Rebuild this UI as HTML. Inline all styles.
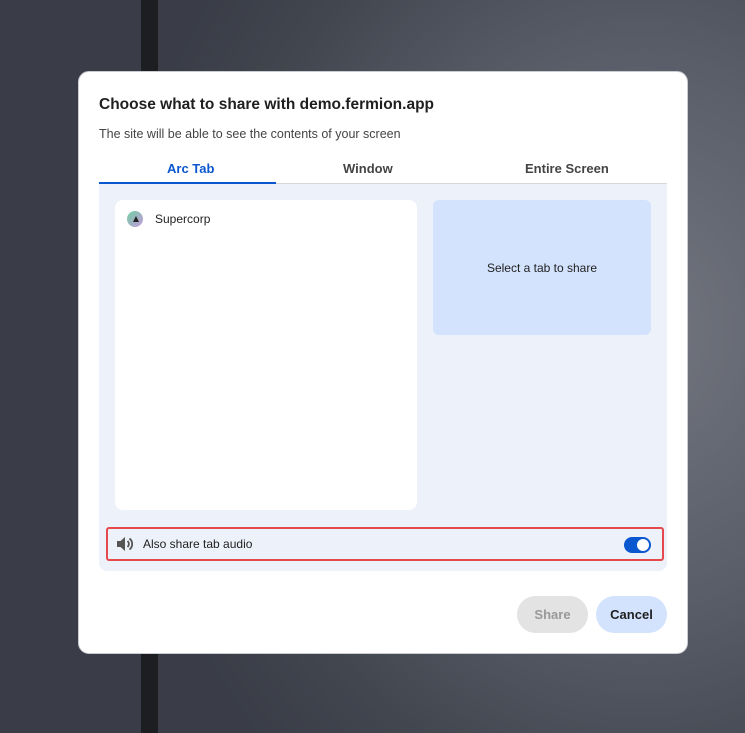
<!DOCTYPE html>
<html><head><style>
*{margin:0;padding:0;box-sizing:border-box}
body{width:745px;height:733px;overflow:hidden;position:relative;font-family:"Liberation Sans",sans-serif;
background:radial-gradient(ellipse 520px 600px at 640px 330px,#73767f 0%,#5a5e69 45%,#42464f 80%,#3a3d47 100%);}
.strip{position:absolute;left:141px;top:0;width:17px;height:733px;background:#1d1e21}
.dlg{position:absolute;left:78px;top:71px;width:610px;height:583px;background:#fff;border-radius:11px;border:1px solid #c9cbd0}
.t{position:absolute;font-size:15.5px;font-weight:bold;color:#1f1f1f;left:20px;top:24px}
.s{position:absolute;font-size:12.5px;color:#444;left:20px;top:55px}
.tab{position:absolute;top:89px;font-size:13px;font-weight:bold;color:#444}
.line{position:absolute;left:20px;top:111px;width:568px;height:1px;background:#d8d8d8}
.act{position:absolute;left:20px;top:110px;width:177px;height:2px;background:#0b57d0}
.area{position:absolute;left:20px;top:112px;width:568px;height:387px;background:#edf1f9;border-radius:0 0 8px 8px}
.list{position:absolute;left:16px;top:16px;width:302px;height:310px;background:#fff;border-radius:8px}
.prev{position:absolute;left:334px;top:16px;width:218px;height:135px;background:#d3e3fd;border-radius:6px;font-size:12px;color:#1f1f1f;display:flex;align-items:center;justify-content:center}
.audio{position:absolute;left:7px;top:343px;width:558px;height:34px;border:2px solid #e5484d;border-radius:3px}
.btn{position:absolute;top:524px;height:37px;border-radius:19px;font-size:13px;font-weight:bold;display:flex;align-items:center;justify-content:center}
</style></head><body>
<div class="strip"></div>
<div class="dlg">
<div class="t">Choose what to share with demo.fermion.app</div>
<div class="s">The site will be able to see the contents of your screen</div>
<div class="tab" style="left:88px;color:#0b57d0">Arc Tab</div>
<div class="tab" style="left:264px">Window</div>
<div class="tab" style="left:446px">Entire Screen</div>
<div class="line"></div><div class="act"></div>
<div class="area">
 <div class="list">
  <div style="position:absolute;left:12px;top:11px;width:16px;height:16px;border-radius:50%;background:linear-gradient(135deg,#6fd0a0,#c79ae0)"></div>
  <div style="position:absolute;left:18px;top:16px;width:0;height:0;border-left:3px solid transparent;border-right:3px solid transparent;border-bottom:6px solid #222"></div>
  <div style="position:absolute;left:40px;top:12px;font-size:12px;color:#1f1f1f">Supercorp</div>
 </div>
 <div class="prev">Select a tab to share</div>
 <div class="audio">
  <svg style="position:absolute;left:8px;top:7px" width="18" height="16" viewBox="0 0 18 16"><path d="M1 5h3.5l4.5-4v14l-4.5-4H1z" fill="#555"/><path d="M11.5 5a4 4 0 0 1 0 6M13.5 2.5a7 7 0 0 1 0 11" stroke="#555" stroke-width="1.8" fill="none"/></svg>
  <div style="position:absolute;left:35px;top:8px;font-size:12px;color:#1f1f1f">Also share tab audio</div>
  <div style="position:absolute;left:516px;top:8px;width:27px;height:16px;border-radius:8px;background:#0b57d0"><div style="position:absolute;right:2px;top:2px;width:12px;height:12px;border-radius:50%;background:#fff"></div></div>
 </div>
</div>
<div class="btn" style="left:438px;width:71px;background:#e3e3e3;color:#999">Share</div>
<div class="btn" style="left:517px;width:71px;background:#d3e3fd;color:#1f1f1f">Cancel</div>
</div>
</body></html>
